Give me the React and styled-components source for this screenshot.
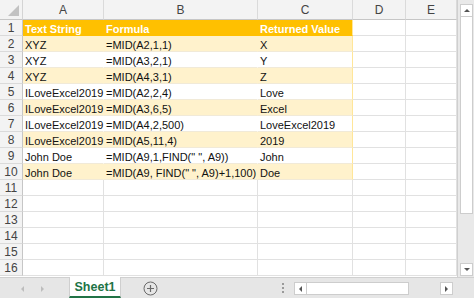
import styled, { createGlobalStyle } from 'styled-components';

const GlobalStyle = createGlobalStyle`
  html, body { margin: 0; padding: 0; background: #fff; overflow: hidden; }
  * { box-sizing: border-box; }
`;

const COLS = [
  { key: 'A', width: 81 },
  { key: 'B', width: 154 },
  { key: 'C', width: 95 },
  { key: 'D', width: 53 },
  { key: 'E', width: 51 },
];

const rows = [
  ['Text String', 'Formula', 'Returned Value'],
  ['XYZ', '=MID(A2,1,1)', 'X'],
  ['XYZ', '=MID(A3,2,1)', 'Y'],
  ['XYZ', '=MID(A4,3,1)', 'Z'],
  ['ILoveExcel2019', '=MID(A2,2,4)', 'Love'],
  ['ILoveExcel2019', '=MID(A3,6,5)', 'Excel'],
  ['ILoveExcel2019', '=MID(A4,2,500)', 'LoveExcel2019'],
  ['ILoveExcel2019', '=MID(A5,11,4)', '2019'],
  ['John Doe', '=MID(A9,1,FIND(" ", A9))', 'John'],
  ['John Doe', '=MID(A9, FIND(" ", A9)+1,100)', 'Doe'],
];

const Window = styled.div`
  width: 474px;
  height: 298px;
  display: flex;
  flex-direction: column;
  font-family: "Liberation Sans", Arial, sans-serif;
  background: #fff;
`;

const Main = styled.div`
  display: flex;
  height: 277px;
`;

const Sheet = styled.div`
  display: grid;
  grid-template-columns: 23px ${COLS.map((c) => c.width + 'px').join(' ')};
  grid-template-rows: 20px repeat(16, 16px);
  width: 457px;
  height: 277px;
  overflow: hidden;
`;

const Corner = styled.div`
  background: #f3f3f3;
  border-right: 1px solid #d4d4d4;
  border-bottom: 1px solid #c6c6c6;
  position: relative;
  &::after {
    content: '';
    position: absolute;
    right: 3px;
    bottom: 3px;
    width: 0;
    height: 0;
    border-left: 11px solid transparent;
    border-bottom: 11px solid #c2c2c2;
  }
`;

const ColHead = styled.div`
  background: #f3f3f3;
  border-right: 1px solid #dadada;
  border-bottom: 1px solid #c6c6c6;
  color: #444;
  font-size: 12px;
  display: flex;
  align-items: center;
  justify-content: center;
  padding-top: 1px;
`;

const RowHead = styled.div`
  background: #f3f3f3;
  border-right: 1px solid #c6c6c6;
  border-bottom: 1px solid #dadada;
  color: #444;
  font-size: 12px;
  display: flex;
  align-items: center;
  justify-content: center;
  padding-top: 1px;
`;

const bandBg = { head: '#ffc000', even: '#fff2cc', odd: '#ffffff' };

const Cell = styled.div`
  background: ${(p) => (p.$band ? bandBg[p.$band] : '#fff')};
  color: ${(p) => (p.$band === 'head' ? '#fff' : '#111')};
  font-weight: ${(p) => (p.$band === 'head' ? 700 : 400)};
  font-size: 11px;
  line-height: 16px;
  padding: 1px 0 0 2px;
  white-space: nowrap;
  overflow: visible;
  border-bottom: 1px solid ${(p) => (p.$band ? (p.$band === 'head' ? '#ffc000' : '#f1ead8') : '#e1e1e1')};
  border-right: 1px solid
    ${(p) => (p.$band ? (p.$edge ? '#ffe699' : bandBg[p.$band]) : '#e1e1e1')};
  position: relative;
  z-index: ${(p) => (p.$band ? 1 : 0)};
`;

const VScroll = styled.div`
  width: 17px;
  height: 277px;
  background: #e9e9e9;
  border-left: 1px solid #cfcfcf;
  display: flex;
  flex-direction: column;
  align-items: center;
  padding: 4px 0 1px;
`;

const ArrowBtn = styled.div`
  width: 13px;
  height: 13px;
  background: #fff;
  border: 1px solid #cdcdcd;
  display: flex;
  align-items: center;
  justify-content: center;
  flex-shrink: 0;
`;

const VThumb = styled.div`
  width: 13px;
  height: 197px;
  background: #fff;
  border: 1px solid #cdcdcd;
  border-top: none;
`;

const VTrack = styled.div`
  flex: 1;
`;

const TabBar = styled.div`
  flex: 1;
  display: flex;
  align-items: stretch;
  background: #e6e6e6;
  border-top: 1px solid #d0d0d0;
`;

const NavArrows = styled.div`
  width: 69px;
  display: flex;
  align-items: center;
  gap: 13px;
  padding-left: 19px;
`;

const Tab = styled.div`
  width: 52px;
  background: #fff;
  color: #217346;
  font-weight: 700;
  font-size: 12.5px;
  display: flex;
  align-items: center;
  justify-content: center;
  border-left: 1px solid #cfcfcf;
  border-right: 1px solid #cfcfcf;
  border-bottom: 2px solid #217346;
  margin-top: -1px;
`;

const AddSheet = styled.div`
  width: 60px;
  display: flex;
  align-items: center;
  padding-left: 22px;
`;

const HScroll = styled.div`
  flex: 1;
  display: flex;
  align-items: center;
  padding-left: 101px;
`;

const Splitter = styled.div`
  width: 3px;
  display: flex;
  flex-direction: column;
  gap: 2px;
  margin-right: 9px;
  span {
    width: 2px;
    height: 2px;
    background: #9a9a9a;
  }
`;

const HThumb = styled.div`
  width: 102px;
  height: 13px;
  background: #fff;
  border: 1px solid #cdcdcd;
  border-left: none;
`;

const HTrack = styled.div`
  width: 31px;
`;

const CornerBox = styled.div`
  width: 18px;
  background: #e6e6e6;
`;

const Tri = ({ dir, color = '#555' }) => {
  const pts = {
    up: '1,5 4,2 7,5',
    down: '1,2 4,5 7,2',
    left: '5,1 2,4 5,7',
    right: '2,1 5,4 2,7',
  }[dir];
  return (
    <svg width="7" height="7" viewBox="0 0 7 7">
      <polygon points={pts} fill={color} />
    </svg>
  );
};

const bandFor = (r) => {
  if (r > 10) return null;
  if (r === 1) return 'head';
  return r % 2 === 0 ? 'even' : 'odd';
};

export default function App() {
  const gridRows = [];
  for (let r = 1; r <= 16; r++) {
    const band = bandFor(r);
    const data = rows[r - 1] || [];
    gridRows.push(<RowHead key={'h' + r}>{r}</RowHead>);
    COLS.forEach((c, i) => {
      const inTable = band && i < 3;
      gridRows.push(
        <Cell key={c.key + r} $band={inTable ? band : null} $edge={inTable && i === 2}>
          {inTable ? data[i] : ''}
        </Cell>
      );
    });
  }

  return (
    <Window>
      <GlobalStyle />
      <Main>
        <Sheet>
          <Corner />
          {COLS.map((c) => (
            <ColHead key={c.key}>{c.key}</ColHead>
          ))}
          {gridRows}
        </Sheet>
        <VScroll>
          <ArrowBtn>
            <Tri dir="up" />
          </ArrowBtn>
          <VThumb />
          <VTrack />
          <ArrowBtn>
            <Tri dir="down" />
          </ArrowBtn>
        </VScroll>
      </Main>
      <TabBar>
        <NavArrows>
          <Tri dir="left" color="#bdbdbd" />
          <Tri dir="right" color="#bdbdbd" />
        </NavArrows>
        <Tab>Sheet1</Tab>
        <AddSheet>
          <svg width="15" height="15" viewBox="0 0 15 15">
            <circle cx="7.5" cy="7.5" r="6.5" fill="none" stroke="#6a6a6a" strokeWidth="1" />
            <path d="M7.5 4v7M4 7.5h7" stroke="#6a6a6a" strokeWidth="1.2" />
          </svg>
        </AddSheet>
        <HScroll>
          <Splitter>
            <span />
            <span />
            <span />
          </Splitter>
          <ArrowBtn>
            <Tri dir="left" />
          </ArrowBtn>
          <HThumb />
          <HTrack />
          <ArrowBtn>
            <Tri dir="right" />
          </ArrowBtn>
        </HScroll>
        <CornerBox />
      </TabBar>
    </Window>
  );
}
